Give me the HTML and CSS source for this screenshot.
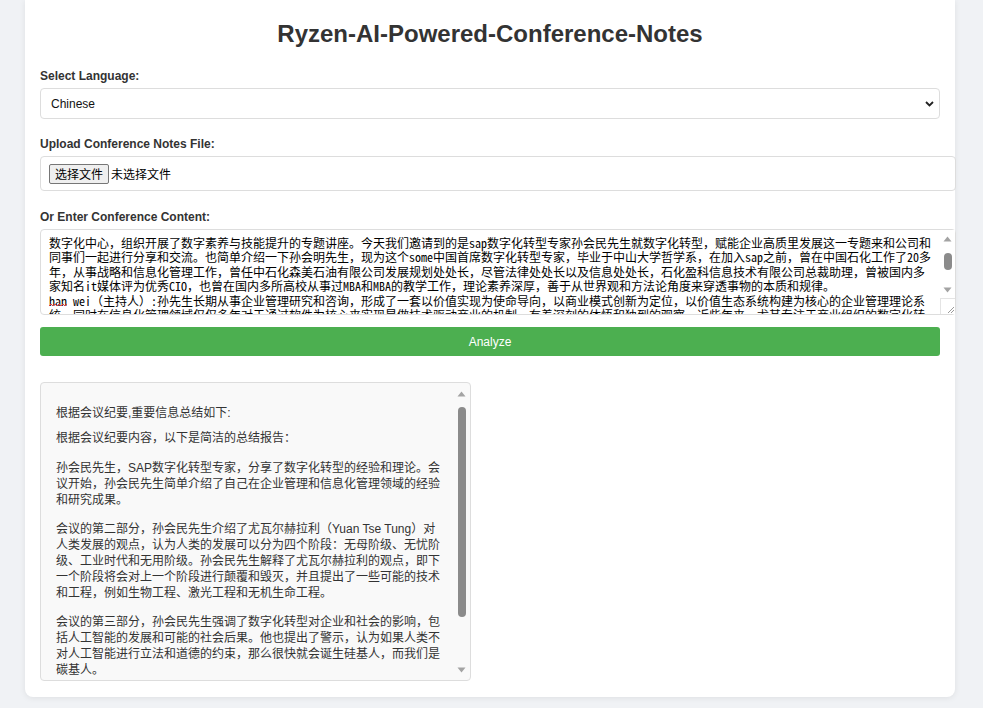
FILE: index.html
```html
<!DOCTYPE html>
<html lang="zh-CN">
<head>
<meta charset="utf-8">
<title>Ryzen-AI-Powered-Conference-Notes</title>
<link rel="stylesheet" href="styles.css">
</head>
<body>
<div class="page">
  <div class="container">
    <h1 class="title">Ryzen-AI-Powered-Conference-Notes</h1>

    <div class="group group-lang">
      <label class="label" for="lang">Select Language:</label>
      <div class="select-wrap">
        <select id="lang" class="select">
          <option>Chinese</option>
          <option>English</option>
        </select>
        <svg class="chevron" width="9" height="6" viewBox="0 0 9 6"><path d="M1 1 L4.5 4.5 L8 1" fill="none" stroke="#222" stroke-width="1.8"/></svg>
      </div>
    </div>

    <div class="group">
      <div class="label">Upload Conference Notes File:</div>
      <div class="file-box">
        <span class="file-btn">选择文件</span><span class="file-name">未选择文件</span>
      </div>
    </div>

    <div class="group group-last">
      <label class="label" for="content">Or Enter Conference Content:</label>
      <div class="ta-wrap">
        <textarea id="content" class="content" spellcheck="false">数字化中心，组织开展了数字素养与技能提升的专题讲座。今天我们邀请到的是sap数字化转型专家孙会民先生就数字化转型，赋能企业高质里发展这一专题来和公司和同事们一起进行分享和交流。也简单介绍一下孙会明先生，现为这个some中国首席数字化转型专家，毕业于中山大学哲学系，在加入sap之前，曾在中国石化工作了20多年，从事战略和信息化管理工作，曾任中石化森美石油有限公司发展规划处处长，尽管法律处处长以及信息处处长，石化盈科信息技术有限公司总裁助理，曾被国内多家知名it媒体评为优秀CIO，也曾在国内多所高校从事过MBA和MBA的教学工作，理论素养深厚，善于从世界观和方法论角度来穿透事物的本质和规律。
han wei（主持人）:孙先生长期从事企业管理研究和咨询，形成了一套以价值实现为使命导向，以商业模式创新为定位，以价值生态系统构建为核心的企业管理理论系统。同时在信息化管理领域仅仅多年对于通过软件为核心来实现是做技术驱动商业的机制，有着深刻的体悟和独到的观察。近些年来，尤其专注于商业组织的数字化转型，提出了许多独到的见解。下面我们就以热烈的掌声欢迎孙先生。
孙会民：谢谢主持人，也谢谢各位同事。今天很高兴有机会和大家一起交流数字化转型这个话题。</textarea>
        <svg class="squiggle" width="18" height="4" viewBox="0 0 18 4"><path d="M0 3 L2 1 L4 3 L6 1 L8 3 L10 1 L12 3 L14 1 L16 3 L18 1" fill="none" stroke="#e04040" stroke-width="1"/></svg>
        <div class="vscroll vscroll-ta">
          <div class="sb-btn"><svg width="9" height="6" viewBox="0 0 9 6"><path d="M0.5 5.5 L4.5 0.5 L8.5 5.5 Z" fill="#a3a3a3"/></svg></div>
          <div class="sb-track"><div class="sb-thumb sb-thumb-ta"></div></div>
          <div class="sb-btn"><svg width="9" height="6" viewBox="0 0 9 6"><path d="M0.5 0.5 L4.5 5.5 L8.5 0.5 Z" fill="#a3a3a3"/></svg></div>
          <div class="resizer"><svg width="14" height="15" viewBox="0 0 14 15"><path d="M13 8 L7 14 M13 11 L10 14" stroke="#9a9a9a" stroke-width="1"/></svg></div>
        </div>
      </div>
    </div>

    <button class="analyze" type="button">Analyze</button>

    <div class="result">
      <div class="result-body">
        <p class="para para-first">根据会议纪要,重要信息总结如下:</p>
        <p class="para para-second">根据会议纪要内容，以下是简洁的总结报告：</p>
        <p class="para">孙会民先生，SAP数字化转型专家，分享了数字化转型的经验和理论。会议开始，孙会民先生简单介绍了自己在企业管理和信息化管理领域的经验和研究成果。</p>
        <p class="para">会议的第二部分，孙会民先生介绍了尤瓦尔赫拉利（Yuan Tse Tung）对人类发展的观点，认为人类的发展可以分为四个阶段：无母阶级、无忧阶级、工业时代和无用阶级。孙会民先生解释了尤瓦尔赫拉利的观点，即下一个阶段将会对上一个阶段进行颠覆和毁灭，并且提出了一些可能的技术和工程，例如生物工程、激光工程和无机生命工程。</p>
        <p class="para">会议的第三部分，孙会民先生强调了数字化转型对企业和社会的影响，包括人工智能的发展和可能的社会后果。他也提出了警示，认为如果人类不对人工智能进行立法和道德的约束，那么很快就会诞生硅基人，而我们是碳基人。</p>
      </div>
      <div class="vscroll vscroll-res">
        <div class="sb-btn sb-btn-res"><svg width="9" height="6" viewBox="0 0 9 6"><path d="M0.5 5.5 L4.5 0.5 L8.5 5.5 Z" fill="#a3a3a3"/></svg></div>
        <div class="sb-track"><div class="sb-thumb sb-thumb-res"></div></div>
        <div class="sb-btn sb-btn-res"><svg width="9" height="6" viewBox="0 0 9 6"><path d="M0.5 0.5 L4.5 5.5 L8.5 0.5 Z" fill="#a3a3a3"/></svg></div>
      </div>
    </div>
  </div>
</div>
</body>
</html>
```

FILE: styles.css
```css
html, body {
  margin: 0;
  padding: 0;
}

body {
  background: #f0f2f5;
  font-family: "Liberation Sans", Arial, "Noto Sans CJK SC", sans-serif;
  color: #333;
}

.page {
  padding: 0 28px 11px 25px;
}

.container {
  background: #fff;
  border-radius: 0 0 8px 8px;
  box-shadow: 0 1px 6px rgba(0, 0, 0, 0.08);
  padding: 20px 15px 16px;
}

.title {
  margin: 0 0 21px;
  font-size: 24px;
  line-height: 28px;
  font-weight: bold;
  text-align: center;
  color: #333;
}

.group {
  margin-bottom: 19px;
}

.group-lang {
  margin-bottom: 18px;
}

.group-last {
  margin-bottom: 12px;
}

.label {
  display: block;
  font-size: 12px;
  line-height: 14px;
  font-weight: bold;
  color: #333;
  margin-bottom: 5px;
}

.select-wrap {
  position: relative;
}

.select {
  display: block;
  width: 100%;
  height: 31px;
  box-sizing: border-box;
  border: 1px solid #ddd;
  border-radius: 4px;
  background: #fff;
  padding: 0 10px;
  font-family: "Liberation Sans", Arial, sans-serif;
  font-size: 12px;
  color: #111;
  appearance: none;
  -webkit-appearance: none;
}

.chevron {
  position: absolute;
  right: 6px;
  top: 13px;
  pointer-events: none;
}

.file-box {
  display: flex;
  align-items: center;
  box-sizing: border-box;
  width: calc(100% + 16px);
  height: 35px;
  border: 1px solid #ddd;
  border-radius: 4px;
  padding: 0 8px;
  font-family: "Noto Sans CJK SC", sans-serif;
  font-size: 12px;
  color: #000;
}

.file-btn {
  box-sizing: border-box;
  height: 20px;
  line-height: 18px;
  padding: 0 5px;
  border: 1px solid #767676;
  border-radius: 2px;
  background: #efefef;
  color: #000;
}

.file-name {
  margin-left: 2px;
}

.ta-wrap {
  position: relative;
  width: calc(100% + 16px);
}

.content {
  display: block;
  box-sizing: border-box;
  width: 100%;
  height: 86px;
  margin: 0;
  border: 1px solid #ddd;
  border-radius: 4px;
  padding: 6px 23px 5px 8px;
  font-family: "Noto Sans Mono CJK SC", "Noto Sans CJK SC", monospace;
  font-size: 12px;
  line-height: 14.4px;
  color: #000;
  background: #fff;
  resize: none;
  overflow: hidden;
}

.squiggle {
  position: absolute;
  left: 9px;
  top: 74px;
}

/* fake scrollbars */
.vscroll {
  position: absolute;
  top: 1px;
  right: 1px;
  bottom: 1px;
  width: 15px;
  display: flex;
  flex-direction: column;
}

.vscroll-ta {
  background: #fff;
}

.sb-btn {
  height: 17px;
  flex: none;
  display: flex;
  align-items: center;
  justify-content: center;
}

.sb-btn-res {
  height: 19px;
}

.sb-track {
  flex: 1;
  min-height: 0;
}

.sb-thumb {
  margin-left: 4px;
  width: 8px;
  border-radius: 4px;
  background: #8b8b8b;
}

.sb-thumb-ta {
  margin-top: 6px;
  height: 17px;
}

.sb-thumb-res {
  margin-top: 4px;
  height: 210px;
}

.resizer {
  flex: none;
  height: 16px;
  box-sizing: border-box;
  border-top: 1px solid #e4e4e4;
  border-left: 1px solid #e4e4e4;
  background: #fff;
}

.resizer svg {
  display: block;
}

.analyze {
  display: block;
  width: 100%;
  height: 29px;
  border: none;
  border-radius: 3px;
  background: #4caf50;
  color: #fff;
  font-family: "Liberation Sans", Arial, sans-serif;
  font-size: 12px;
  margin: 0 0 26px;
  padding: 0;
}

.result {
  position: relative;
  box-sizing: border-box;
  width: 431px;
  height: 299px;
  border: 1px solid #ddd;
  border-radius: 4px;
  background: #f9f9f9;
  overflow: hidden;
}

.result-body {
  box-sizing: border-box;
  height: 100%;
  overflow: hidden;
  padding: 22px 28px 15px 15px;
  font-family: "Liberation Sans", Arial, "Noto Sans CJK SC", sans-serif;
  font-size: 12px;
  line-height: 16px;
  color: #333;
}

.para {
  margin: 0 0 13px;
}

.para-first {
  margin-bottom: 9px;
}

.para-second {
  margin-bottom: 14px;
}
```
